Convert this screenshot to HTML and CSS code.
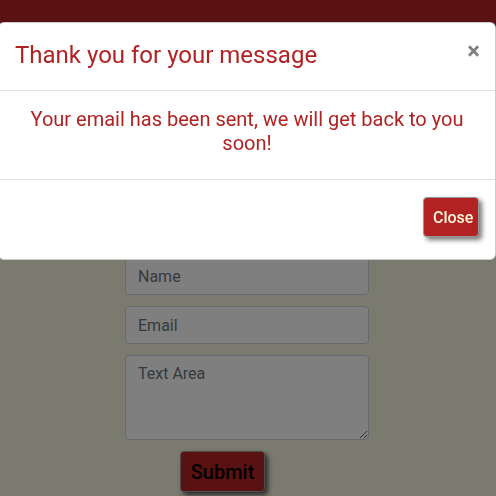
FILE: index.html
```html
<!DOCTYPE html>
<html>
<head>
<meta charset="utf-8">
<link rel="stylesheet" href="styles.css">
</head>
<body>
<header class="navbar"></header>
<main class="page">
  <form class="contact">
    <input class="field" type="text" placeholder="Name">
    <input class="field" type="email" placeholder="Email">
    <textarea class="field area" placeholder="Text Area"></textarea>
    <button class="submit" type="button">Submit</button>
  </form>
</main>
<div class="backdrop"></div>
<div class="modal">
  <div class="modal-content">
    <div class="modal-header">
      <h5 class="modal-title">Thank you for your message</h5>
      <button class="close" type="button">×</button>
    </div>
    <div class="modal-body">
      <p>Your email has been sent, we will get back to you soon!</p>
    </div>
    <div class="modal-footer">
      <button class="btn-close" type="button">Close</button>
    </div>
  </div>
</div>
</body>
</html>
```
FILE: styles.css
```css
* { box-sizing: border-box; }
html, body { margin: 0; padding: 0; }
body {
  font-family: Roboto, "Liberation Sans", sans-serif;
  background: #f5f5dc;
  height: 496px;
  overflow: hidden;
}
.navbar {
  height: 60px;
  background: #b22222;
}
.page {
  padding-top: 197px;
}
.contact {
  width: 244px;
  margin-left: 125px;
  display: flex;
  flex-direction: column;
  gap: 11px;
}
.field {
  display: block;
  width: 100%;
  height: 38px;
  padding: 6px 12px;
  font-family: inherit;
  font-size: 16px;
  line-height: 24px;
  color: #495057;
  background: #fff;
  border: 1px solid #ced4da;
  border-radius: 4px;
}
.field::placeholder { color: #6c757d; }
.area { height: 85px; }
.submit {
  align-self: flex-start;
  margin-left: 55px;
  width: 85px;
  height: 41px;
  padding: 0;
  font-family: inherit;
  font-size: 20px;
  font-weight: 500;
  color: #000;
  background: #b22222;
  border: 1px solid #999;
  border-radius: 4px;
  box-shadow: 3px 3px 5px #555;
}
.backdrop {
  position: fixed;
  inset: 0;
  background: rgba(0, 0, 0, 0.5);
}
.modal {
  position: fixed;
  top: 22px;
  left: -2px;
  right: 0;
}
.modal-content {
  background: #fff;
  border: 1px solid rgba(0, 0, 0, 0.2);
  border-radius: 6px;
}
.modal-header {
  display: flex;
  align-items: flex-start;
  justify-content: space-between;
  padding: 16px 16px 18px 16px;
  border-bottom: 1px solid #dee2e6;
}
.modal-title {
  margin: 0;
  font-size: 24px;
  line-height: 33px;
  font-weight: 400;
  color: #b22222;
}
.close {
  background: none;
  border: 0;
  padding: 0;
  margin: 0 -1px 0 0;
  font-family: inherit;
  font-size: 24px;
  font-weight: 700;
  line-height: 24px;
  color: #000;
  opacity: 0.5;
}
.modal-body {
  padding: 16px;
  border-bottom: 1px solid #dee2e6;
}
.modal-body p {
  margin: 0 0 8px;
  text-align: center;
  font-size: 20px;
  line-height: 24px;
  color: #b22222;
}
.modal-footer {
  display: flex;
  justify-content: flex-end;
  padding: 17px 16px 22px;
}
.btn-close {
  width: 56px;
  height: 40px;
  padding: 0 0 0 9px;
  text-align: left;
  font-family: inherit;
  font-size: 16px;
  font-weight: 500;
  color: #fff8dc;
  background: #b22222;
  border: 1px solid #999;
  border-radius: 4px;
  box-shadow: 3px 3px 5px #777;
}
```
